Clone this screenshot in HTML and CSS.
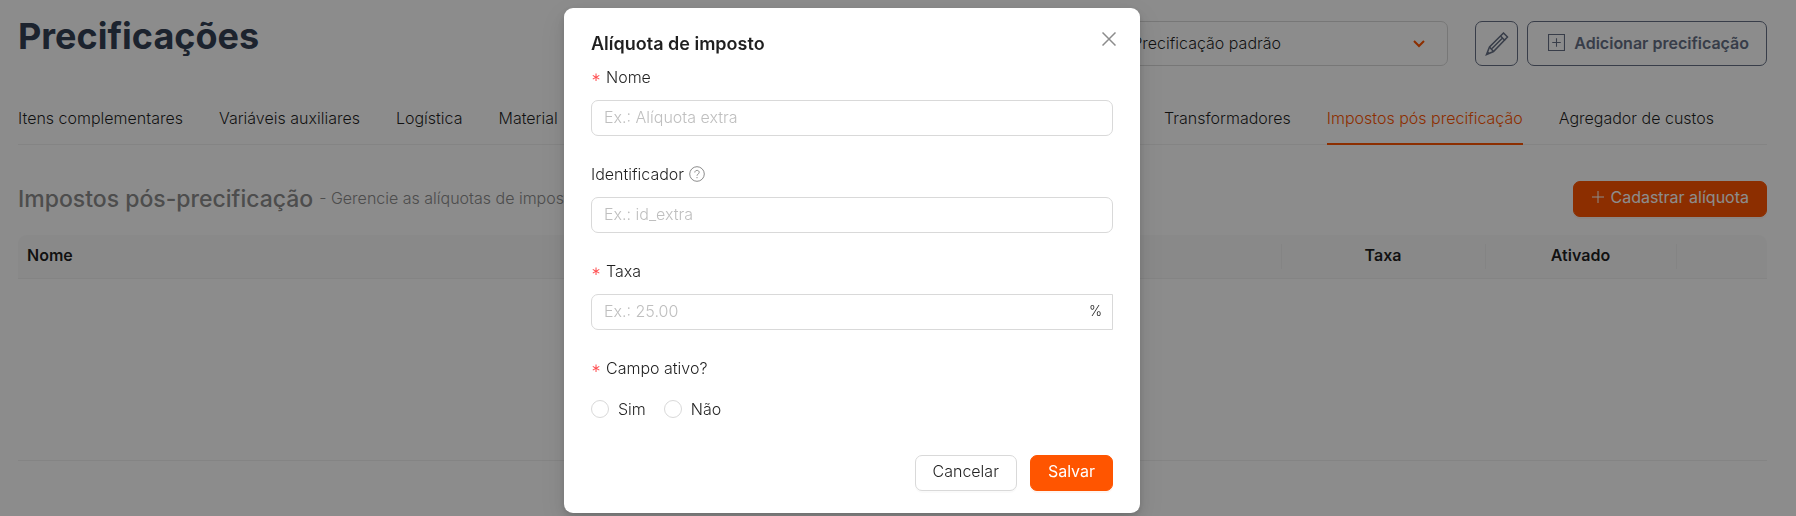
FILE: index.html
```html
<!DOCTYPE html>
<html lang="pt-BR">
<head>
    <meta charset="UTF-8">
    <meta name="viewport" content="width=device-width, initial-scale=1">
    <title>Precificações</title>
    <link rel="stylesheet" href="styles.css">
</head>
<body>
<main class="page">
    <header class="page-header">
        <h1 class="page-title">Precificações</h1>
        <div class="page-actions">
            <div class="select-wrapper">
                <select class="select" aria-label="Precificação">
                    <option>Precificação padrão</option>
                </select>
                <svg class="select-arrow" viewBox="0 0 12 8">
                    <path d="M1 1l5 5 5-5"/>
                </svg>
            </div>
            <button class="outline-button edit-button" type="button" aria-label="Editar">
                <svg class="edit-icon" viewBox="0 0 24 24">
                    <path d="M1.500 22.500L4.500 15L18.500 1L22.500 5L8.500 19.500Z"/>
                    <path d="M4.500 15L8.500 19.500M7 16.500L18 5.500M15.500 4L20 8.500M2.500 20L4 21.500"/>
                </svg>
            </button>
            <button class="outline-button add-button" type="button">
                <svg class="add-icon" viewBox="0 0 16 16">
                    <path d="M.5.5h15v15H.5zM8 4v8M4 8h8"/>
                </svg>
                Adicionar precificação
            </button>
        </div>
    </header>

    <nav class="tabs">
        <a href="#" class="tab">Itens complementares</a>
        <a href="#" class="tab">Variáveis auxiliares</a>
        <a href="#" class="tab">Logística</a>
        <a href="#" class="tab">Material</a>
        <a href="#" class="tab tab-end">Transformadores</a>
        <a href="#" class="tab active">Impostos pós precificação</a>
        <a href="#" class="tab">Agregador de custos</a>
    </nav>

    <section>
        <div class="section-header">
            <h2 class="section-title">Impostos pós-precificação</h2>
            <p class="section-text">- Gerencie as alíquotas de imposto</p>
            <button class="button primary" type="button">
                <svg class="plus-icon" viewBox="0 0 14 14">
                    <path d="M7 1v12M1 7h12"/>
                </svg>
                Cadastrar alíquota
            </button>
        </div>
        <table class="table">
            <thead>
            <tr>
                <th class="col-name">Nome</th>
                <th class="col-rate">Taxa</th>
                <th class="col-active">Ativado</th>
                <td class="col-actions"></td>
            </tr>
            </thead>
            <tbody>
            <tr>
                <td class="table-empty" colspan="4"></td>
            </tr>
            </tbody>
        </table>
    </section>
</main>

<div class="overlay">
    <div class="modal" role="dialog" aria-modal="true" aria-labelledby="modal-title">
        <button class="close-button" type="button" aria-label="Fechar">
            <svg class="close-icon" viewBox="0 0 14 14">
                <path d="M.5.5l13 13M13.500.5l-13 13"/>
            </svg>
        </button>
        <h2 class="modal-title" id="modal-title">Alíquota de imposto</h2>
        <form class="form">
            <div class="field">
                <label class="label required" for="nome">Nome</label>
                <input class="input" id="nome" type="text" placeholder="Ex.: Alíquota extra">
            </div>
            <div class="field">
                <label class="label" for="identificador">
                    Identificador
                    <svg class="help-icon" viewBox="0 0 16 16">
                        <circle cx="8" cy="8" r="7.300"/>
                        <path d="M5.800 6.500C5.800 3.700 10.200 3.700 10.200 6.400C10.200 8 8 8 8 9.700M8 11v1.200"/>
                    </svg>
                </label>
                <input class="input" id="identificador" type="text" placeholder="Ex.: id_extra">
            </div>
            <div class="field">
                <label class="label required" for="taxa">Taxa</label>
                <div class="input input-group">
                    <input class="input-inner" id="taxa" type="text" placeholder="Ex.: 25.00">
                    <span class="suffix">%</span>
                </div>
            </div>
            <fieldset class="field">
                <legend class="label required">Campo ativo?</legend>
                <div class="radio-group">
                    <label class="radio-label"><input class="radio" type="radio" name="ativo">Sim</label>
                    <label class="radio-label"><input class="radio" type="radio" name="ativo">Não</label>
                </div>
            </fieldset>
            <div class="modal-footer">
                <button class="button" type="button">Cancelar</button>
                <button class="button primary" type="submit">Salvar</button>
            </div>
        </form>
    </div>
</div>
</body>
</html>
```
FILE: styles.css
```css
* {
    margin: 0;
    padding: 0;
    box-sizing: border-box;
}

body {
    font-family: 'Inter', sans-serif;
    font-size: 16px;
    font-weight: 300;
    line-height: 24px;
    color: rgba(0, 0, 0, 0.88);
    background: #fff;
}

button,
input,
select {
    font: inherit;
    color: inherit;
}

button {
    cursor: pointer;
}

svg {
    fill: none;
    stroke: currentColor;
    flex-shrink: 0;
}

/* Page */
.page {
    padding: 14px 29px 0 18px;
}

.page-header {
    display: flex;
    justify-content: space-between;
    align-items: flex-start;
}

.page-title {
    font-size: 36px;
    line-height: 44px;
    font-weight: 700;
    color: #344054;
}

.page-actions {
    display: flex;
    gap: 9px;
    padding-top: 7px;
}

.select-wrapper {
    position: relative;
    width: 329px;
    margin-right: 18px;
}

.select {
    width: 100%;
    height: 45px;
    padding: 0 12px 2px;
    border: 1px solid #d9d9d9;
    border-radius: 7px;
    background: #fff;
    appearance: none;
}

.select-arrow {
    position: absolute;
    top: 19px;
    right: 23px;
    width: 12px;
    height: 8px;
    color: #ff5500;
    stroke-width: 2;
    pointer-events: none;
}

.outline-button {
    display: flex;
    align-items: center;
    justify-content: center;
    height: 45px;
    border: 1px solid #667085;
    border-radius: 7px;
    background: #fff;
    color: #667085;
    font-weight: 600;
}

.edit-button {
    width: 43px;
}

.edit-icon {
    width: 24px;
    height: 24px;
    stroke-width: 1.5;
}

.add-button {
    gap: 9px;
    padding: 0 17px 2px 20px;
}

.add-icon {
    width: 17px;
    height: 17px;
}

.tabs {
    display: flex;
    gap: 36px;
    margin-top: 27px;
    padding-right: 53px;
    border-bottom: 1px solid #f0f0f0;
    white-space: nowrap;
}

.tab {
    padding: 13px 0;
    margin-bottom: -1px;
    border-bottom: 2px solid transparent;
    color: inherit;
    text-decoration: none;
}

.tab-end {
    margin-left: auto;
}

.tab.active {
    color: #ff5500;
    border-color: #ff5500;
}

.section-header {
    display: flex;
    align-items: center;
    gap: 6px;
    margin: 36px 0 18px;
}

.section-title {
    font-size: 23px;
    line-height: 32px;
    font-weight: 500;
    color: #8c8c8c;
}

.section-text {
    padding-bottom: 3px;
    color: #8c8c8c;
}

.section-header .button {
    margin-left: auto;
}

.table {
    width: 100%;
    border-spacing: 0;
    table-layout: fixed;
}

.table th,
.table thead td {
    height: 44px;
    padding: 0 9px 4px;
    border-bottom: 1px solid #f0f0f0;
    background: linear-gradient(#f0f0f0, #f0f0f0) left center / 1px 25px no-repeat #fafafa;
    font-weight: 600;
}

.table .col-name {
    text-align: left;
    background: #fafafa;
    border-top-left-radius: 9px;
}

.col-rate {
    width: 204px;
}

.col-active {
    width: 191px;
}

.col-actions {
    width: 91px;
    border-top-right-radius: 9px;
}

.table-empty {
    height: 182px;
    border-bottom: 1px solid #f0f0f0;
}

/* Buttons */
.button {
    display: inline-flex;
    align-items: center;
    gap: 5px;
    height: 36px;
    padding: 0 17px 4px;
    border: 1px solid #d9d9d9;
    border-radius: 7px;
    background: #fff;
    box-shadow: 0 2px 0 rgba(0, 0, 0, 0.02);
}

.button.primary {
    border-color: #ff5500;
    background: #ff5500;
    color: #fff;
    font-weight: 400;
    box-shadow: 0 2px 0 rgba(255, 85, 0, 0.06);
}

.plus-icon {
    width: 14px;
    height: 14px;
}

/* Modal */
.overlay {
    position: fixed;
    inset: 0;
    padding: 8px 92px 0 0;
    background: rgba(0, 0, 0, 0.45);
    overflow: hidden;
}

.modal {
    position: relative;
    width: 100%;
    max-width: 576px;
    margin: 0 auto;
    padding: 22px 27px;
    border-radius: 9px;
    background: #fff;
    box-shadow: 0 6px 16px rgba(0, 0, 0, 0.08), 0 3px 6px rgba(0, 0, 0, 0.12), 0 9px 28px 8px rgba(0, 0, 0, 0.05);
}

.modal-title {
    font-size: 18px;
    line-height: 27px;
    font-weight: 600;
}

.close-button {
    position: absolute;
    top: 18px;
    right: 18px;
    display: flex;
    align-items: center;
    justify-content: center;
    width: 26px;
    height: 26px;
    border: none;
    background: transparent;
    color: #8c8c8c;
}

.close-icon {
    width: 14px;
    height: 14px;
    stroke-width: 1.5;
}

.field {
    margin-bottom: 18px;
    border: none;
}

.label {
    display: flex;
    align-items: center;
    gap: 5px;
    padding: 8px 0 11px;
}

.required::before {
    content: '∗';
    font-size: 12px;
    font-weight: 400;
    color: #ff4d4f;
}

.help-icon {
    width: 16px;
    height: 16px;
    color: #8c8c8c;
}

.input {
    width: 100%;
    height: 36px;
    padding: 0 12px 2px;
    border: 1px solid #d9d9d9;
    border-radius: 7px;
    background: #fff;
}

.input::placeholder,
.input-inner::placeholder {
    color: #bfbfbf;
}

.input-group {
    display: flex;
    align-items: center;
    padding-right: 10px;
    border-radius: 7px 0 0 7px;
}

.input-inner {
    flex: 1;
    min-width: 0;
    border: none;
    outline: none;
}

.suffix {
    font-size: 14px;
}

.radio-group {
    display: flex;
    gap: 18px;
    height: 36px;
}

.radio-label {
    display: flex;
    align-items: center;
    gap: 9px;
}

.radio {
    width: 18px;
    height: 18px;
    border: 1px solid #d9d9d9;
    border-radius: 50%;
    appearance: none;
}

.modal-footer {
    display: flex;
    justify-content: flex-end;
    gap: 13px;
    padding-top: 10px;
}
```
